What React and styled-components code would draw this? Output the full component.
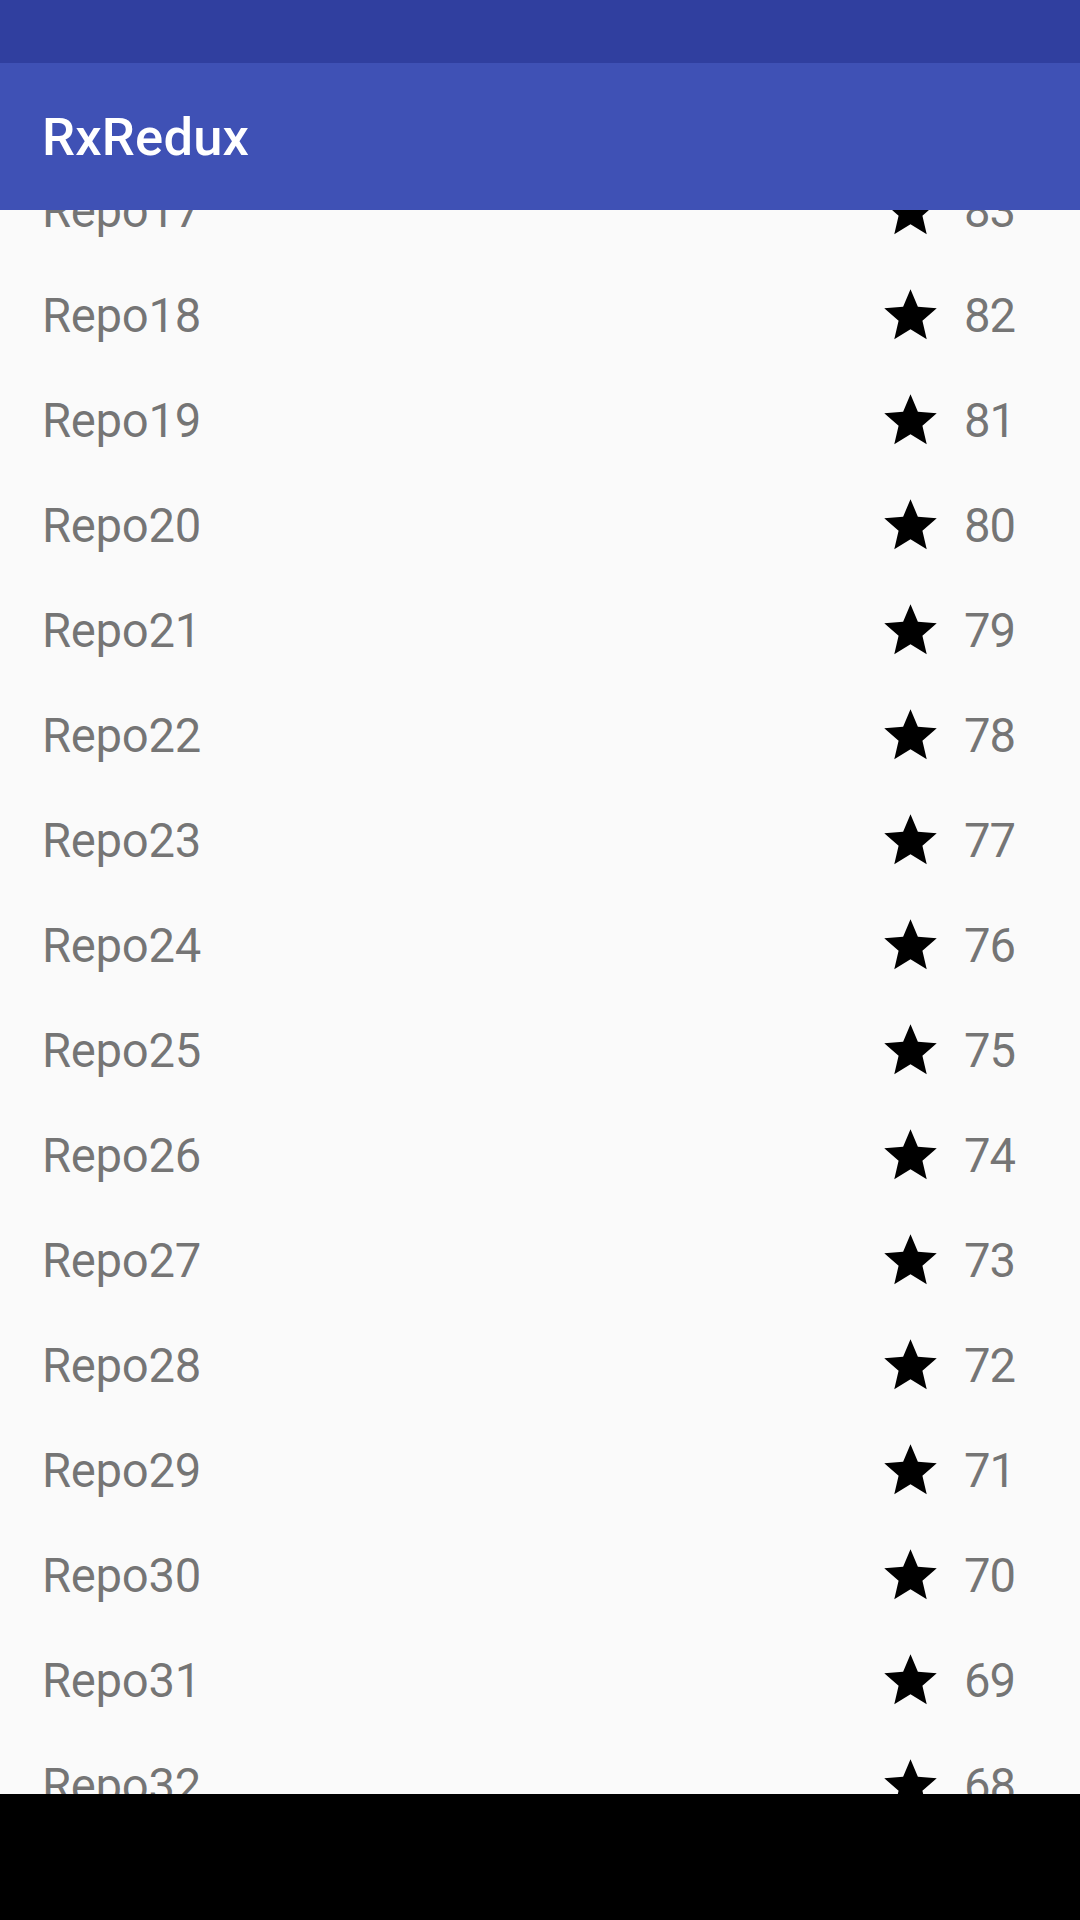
import styled, { createGlobalStyle } from "styled-components";

const GlobalStyle = createGlobalStyle`
  html, body {
    margin: 0;
    padding: 0;
    background: #fafafa;
  }
  body {
    font-family: Roboto, "Noto Sans", sans-serif;
  }
`;

const Screen = styled.div`
  width: 1080px;
  height: 1920px;
  display: flex;
  flex-direction: column;
  overflow: hidden;
  background: #fafafa;
`;

const StatusBar = styled.div`
  height: 63px;
  flex: none;
  background: #303f9f;
`;

const Toolbar = styled.header`
  height: 147px;
  flex: none;
  display: flex;
  align-items: center;
  padding-left: 42px;
  background: #3f51b5;
  position: relative;
  z-index: 1;
`;

const Title = styled.h1`
  margin: 0;
  font-size: 52.5px;
  font-weight: 500;
  color: #ffffff;
  letter-spacing: 0.2px;
`;

const List = styled.main`
  flex: 1;
  overflow: hidden;
`;

const Scroller = styled.div`
  margin-top: -52px;
`;

const Row = styled.div`
  height: 105px;
  display: flex;
  align-items: center;
  justify-content: space-between;
  padding: 0 65px 0 42px;
`;

const RepoName = styled.span`
  font-size: 47.25px;
  letter-spacing: -0.3px;
  color: rgba(0, 0, 0, 0.54);
`;

const Stars = styled.div`
  display: flex;
  align-items: center;
  gap: 22px;
`;

const StarIcon = styled.svg`
  width: 63px;
  height: 63px;
  fill: #000000;
  flex: none;
`;

const Count = styled.span`
  font-size: 47.25px;
  letter-spacing: -1px;
  color: rgba(0, 0, 0, 0.54);
`;

const NavBar = styled.div`
  height: 126px;
  flex: none;
  background: #000000;
`;

const repos = Array.from({ length: 17 }, (_, i) => ({
  name: `Repo${17 + i}`,
  stars: 83 - i,
}));

function Star() {
  return (
    <StarIcon viewBox="0 0 24 24">
      <path d="M12 17.27L18.18 21l-1.64-7.03L22 9.24l-7.19-.61L12 2 9.19 8.63 2 9.24l5.46 4.73L5.82 21z" />
    </StarIcon>
  );
}

export default function App() {
  return (
    <>
      <GlobalStyle />
      <Screen>
        <StatusBar />
        <Toolbar>
          <Title>RxRedux</Title>
        </Toolbar>
        <List>
          <Scroller>
            {repos.map((repo) => (
              <Row key={repo.name}>
                <RepoName>{repo.name}</RepoName>
                <Stars>
                  <Star />
                  <Count>{repo.stars}</Count>
                </Stars>
              </Row>
            ))}
          </Scroller>
        </List>
        <NavBar />
      </Screen>
    </>
  );
}
